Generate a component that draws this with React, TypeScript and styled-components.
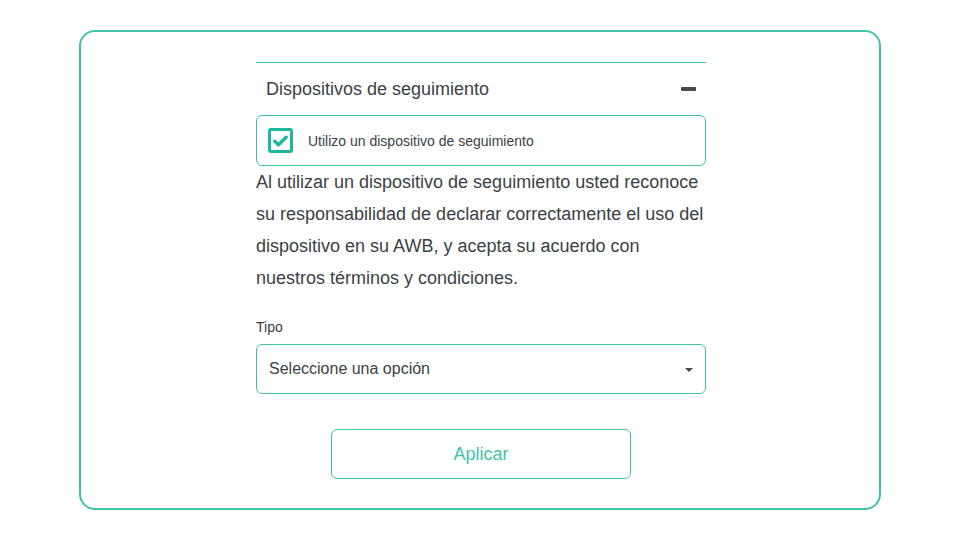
import React from "react";
import styled, { createGlobalStyle } from "styled-components";

const Global = createGlobalStyle`
  html, body { margin: 0; padding: 0; background: #fff; }
  body { font-family: "Liberation Sans", Arial, sans-serif; }
  * { box-sizing: border-box; }
`;

const teal = "#3fc4a9";

const Page = styled.div`
  width: 960px;
  height: 540px;
  padding-top: 30px;
  display: flex;
  justify-content: center;
  align-items: flex-start;
`;

const Card = styled.div`
  width: 802px;
  height: 480px;
  border: 2px solid ${teal};
  border-radius: 16px;
  display: flex;
  justify-content: center;
  padding: 30px 0 0 2px;
`;

const Column = styled.div`
  width: 450px;
  display: flex;
  flex-direction: column;
`;

const Header = styled.div`
  border-top: 1px solid ${teal};
  height: 53px;
  display: flex;
  align-items: center;
  justify-content: space-between;
  padding: 0 10px 0 10px;
`;

const HeaderTitle = styled.span`
  font-size: 18px;
  color: #3b3f45;
  margin-top: 0px;
`;

const Minus = styled.span`
  width: 15px;
  height: 4px;
  background: #45484d;
  border-radius: 1px;
  margin-top: -1px;
`;

const CheckCard = styled.label`
  height: 51px;
  border: 1px solid ${teal};
  border-radius: 6px;
  display: flex;
  align-items: center;
  padding-left: 11px;
  gap: 15px;
`;

const Box = styled.span`
  width: 25px;
  height: 25px;
  border: 3px solid #1db89b;
  border-radius: 3px;
  display: flex;
  align-items: center;
  justify-content: center;
`;

const CheckLabel = styled.span`
  font-size: 14px;
  color: #3b3f45;
`;

const Paragraph = styled.p`
  margin: 0;
  font-size: 18px;
  line-height: 32px;
  color: #3b3f45;
`;

const FieldLabel = styled.div`
  margin-top: 24px;
  font-size: 14px;
  line-height: 18px;
  color: #3b3f45;
`;

const Select = styled.div`
  margin-top: 8px;
  height: 50px;
  border: 1px solid ${teal};
  border-radius: 6px;
  display: flex;
  align-items: center;
  justify-content: space-between;
  padding: 0 12px 0 12px;
  font-size: 16px;
  color: #3b3f45;
`;

const Caret = styled.span`
  width: 0;
  height: 0;
  border-left: 4px solid transparent;
  border-right: 4px solid transparent;
  border-top: 4px solid #45484d;
  margin-top: 1px;
`;

const ButtonRow = styled.div`
  margin-top: 35px;
  display: flex;
  justify-content: center;
`;

const Button = styled.button`
  width: 300px;
  height: 50px;
  background: #fff;
  border: 1px solid ${teal};
  border-radius: 6px;
  font-family: "Liberation Sans", Arial, sans-serif;
  font-size: 18px;
  color: ${teal};
  padding: 0;
`;

export default function App() {
  return (
    <>
      <Global />
      <Page>
        <Card>
          <Column>
            <Header>
              <HeaderTitle>Dispositivos de seguimiento</HeaderTitle>
              <Minus />
            </Header>
            <CheckCard>
              <Box>
                <svg width="15" height="12" viewBox="0 0 15 12">
                  <path d="M1.8 6.3 L5.5 9.8 L13.2 2.2" fill="none" stroke="#1db89b" strokeWidth="3.4" strokeLinecap="round" strokeLinejoin="round" />
                </svg>
              </Box>
              <CheckLabel>Utilizo un dispositivo de seguimiento</CheckLabel>
            </CheckCard>
            <Paragraph>
              Al utilizar un dispositivo de seguimiento usted reconoce su responsabilidad de declarar correctamente el uso del dispositivo en su AWB, y acepta su acuerdo con nuestros términos y condiciones.
            </Paragraph>
            <FieldLabel>Tipo</FieldLabel>
            <Select>
              <span>Seleccione una opción</span>
              <Caret />
            </Select>
            <ButtonRow>
              <Button>Aplicar</Button>
            </ButtonRow>
          </Column>
        </Card>
      </Page>
    </>
  );
}
